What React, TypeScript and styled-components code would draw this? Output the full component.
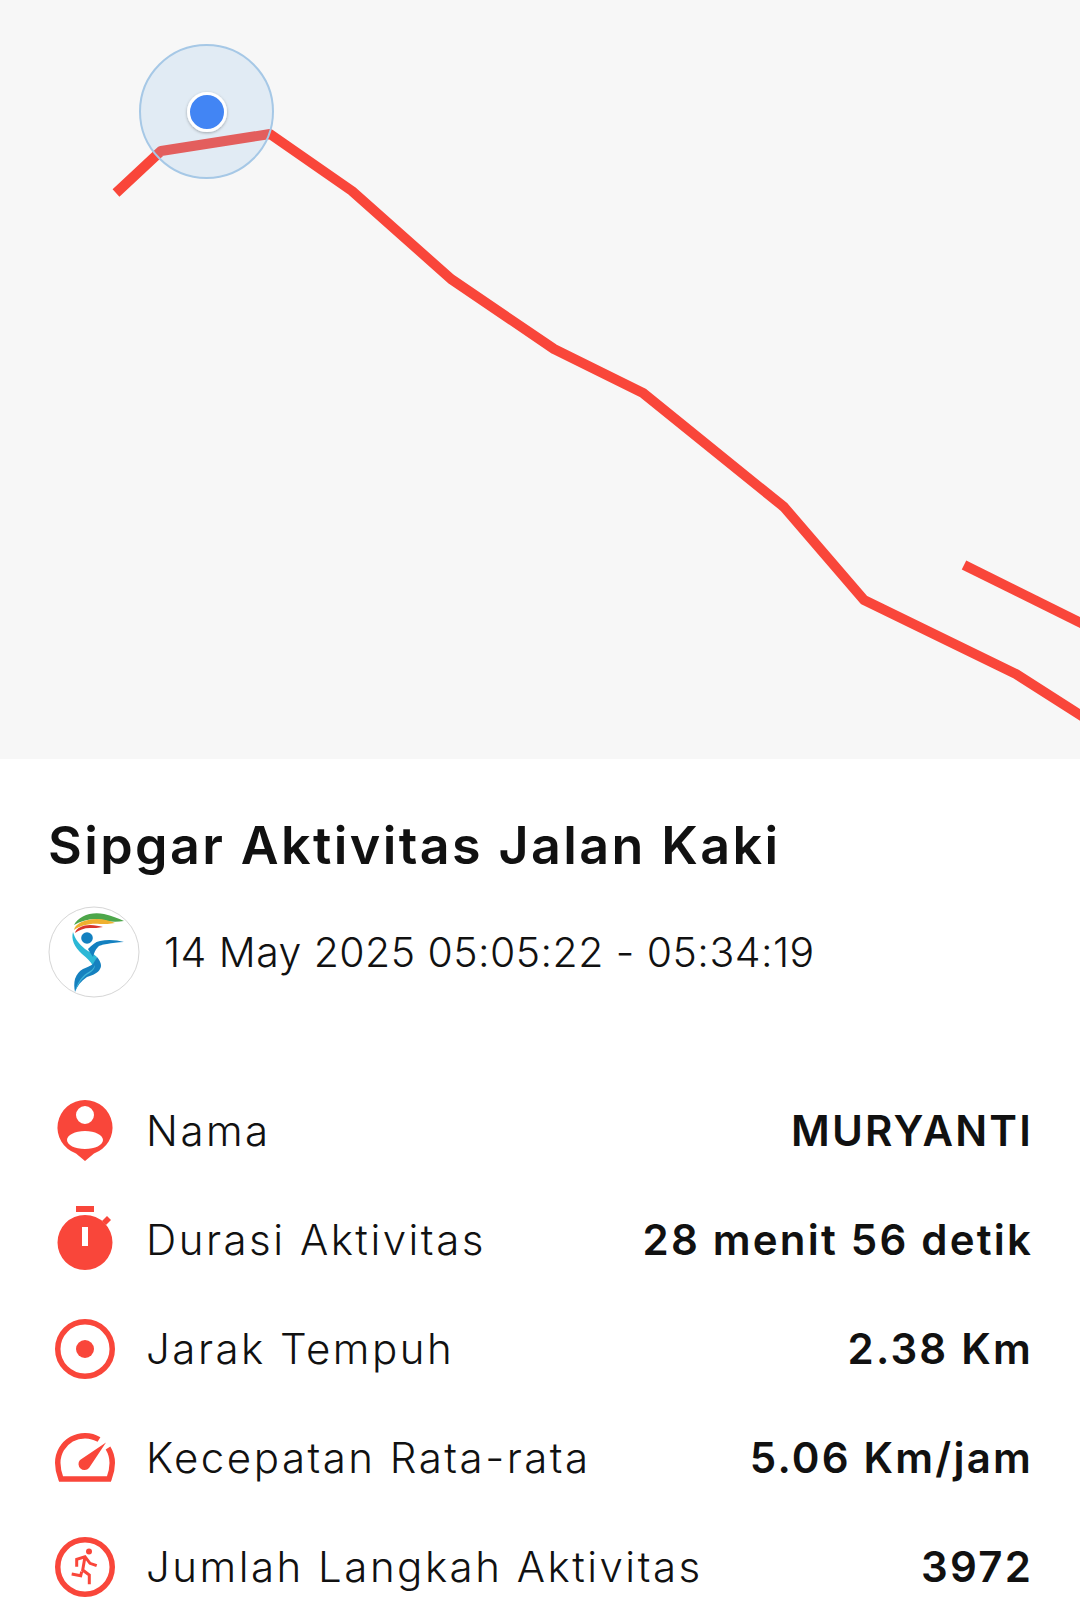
import { FC } from 'react';
import styled, { createGlobalStyle } from 'styled-components';

const RED = '#f9463a';

const GlobalStyle = createGlobalStyle`
  html, body {
    margin: 0;
    padding: 0;
    background: #fff;
    font-family: Inter, "Open Sans", sans-serif;
    color: #111;
  }
`;

const Page = styled.div`
  width: 1080px;
  height: 1624px;
  overflow: hidden;
`;

const MapArea = styled.div`
  height: 759px;
  background: #f7f7f7;
`;

const MapSvg = styled.svg`
  display: block;
`;

const Details = styled.section`
  padding: 55px 47px 0 48px;
`;

const Title = styled.h1`
  margin: 0;
  font-size: 52px;
  line-height: 64px;
  font-weight: 600;
  letter-spacing: 2.4px;
`;

const Meta = styled.div`
  display: flex;
  align-items: center;
  gap: 24px;
  margin-top: 28px;
`;

const Logo = styled.svg`
  flex: none;
`;

const DateText = styled.span`
  font-size: 41px;
  font-weight: 300;
  letter-spacing: 0.45px;
`;

const Rows = styled.div`
  display: flex;
  flex-direction: column;
  margin-top: 78px;
`;

const Row = styled.div`
  display: flex;
  align-items: center;
  height: 109px;
`;

const IconSlot = styled.svg`
  flex: none;
  width: 68px;
  height: 68px;
  margin: 0 27px 0 3px;
`;

const Label = styled.span`
  flex: 1;
  font-size: 42px;
  font-weight: 300;
  letter-spacing: 2.5px;
`;

const Value = styled.span`
  font-size: 42px;
  font-weight: 600;
  letter-spacing: 2.2px;
`;

const UserIcon: FC = () => (
  <IconSlot viewBox="0 0 68 68">
    <path
      fill={RED}
      fillRule="evenodd"
      d="M34 3a27.500 27.500 0 0 1 9 53.500L34 64l-9-7.500A27.500 27.500 0 0 1 34 3Zm0 6a9 9 0 1 0 0 18 9 9 0 0 0 0-18Zm0 25c-10 0-18 4-18 9s8 9 18 9 18-4 18-9-8-9-18-9Z"
    />
  </IconSlot>
);

const TimerIcon: FC = () => (
  <IconSlot viewBox="0 0 68 68">
    <path fill={RED} d="M25 0h18v6H25z" />
    <path fill={RED} d="m51 15 5-5 4 4-5 5z" />
    <path
      fill={RED}
      fillRule="evenodd"
      d="M34 9a27.500 27.500 0 1 1 0 55 27.500 27.500 0 0 1 0-55Zm-3 12v19h6V21Z"
    />
  </IconSlot>
);

const TargetIcon: FC = () => (
  <IconSlot viewBox="0 0 68 68">
    <circle cx="34" cy="34" r="27.250" fill="none" stroke={RED} strokeWidth="5.500" />
    <circle cx="34" cy="34" r="9" fill={RED} />
  </IconSlot>
);

const GaugeIcon: FC = () => (
  <IconSlot viewBox="0 0 68 68">
    <path
      fill="none"
      stroke={RED}
      strokeWidth="5.500"
      d="M48 15.500A27.250 27.250 0 0 0 6.750 39C6.750 45 8 50 10 55H58C60 50 61.250 45 61.250 39 61.250 33 59.500 28 57 24"
    />
    <path fill={RED} d="M55 18.500 38 44A6 6 0 0 1 29 36Z" />
  </IconSlot>
);

const RunnerIcon: FC = () => (
  <IconSlot viewBox="0 0 68 68">
    <circle cx="34" cy="34" r="27.250" fill="none" stroke={RED} strokeWidth="5.500" />
    <circle cx="38" cy="18.500" r="3" fill={RED} />
    <path
      fill="none"
      stroke={RED}
      strokeWidth="3"
      d="M25.700 33.700v-7.400L34 23.700l5 6.600 6.700 2.400M34 23.700 31.700 37l6.600 5v9.300M30.700 38.700l-1 4-9-1.700"
    />
  </IconSlot>
);

const rows = [
  { label: 'Nama', value: 'MURYANTI', icon: <UserIcon /> },
  { label: 'Durasi Aktivitas', value: '28 menit 56 detik', icon: <TimerIcon /> },
  { label: 'Jarak Tempuh', value: '2.38 Km', icon: <TargetIcon /> },
  { label: 'Kecepatan Rata-rata', value: '5.06 Km/jam', icon: <GaugeIcon /> },
  { label: 'Jumlah Langkah Aktivitas', value: '3972', icon: <RunnerIcon /> },
];

const App: FC = () => (
  <Page>
    <GlobalStyle />
    <MapArea>
      <MapSvg width="1080" height="759" viewBox="0 0 1080 759">
        <defs>
          <filter id="dot-shadow" x="-30%" y="-30%" width="160%" height="160%">
            <feDropShadow dx="0" dy="1" stdDeviation="1.500" floodColor="#000" floodOpacity="0.3" />
          </filter>
        </defs>
        <g fill="none" stroke={RED} strokeWidth="10" strokeLinejoin="round">
          <path d="M116 193 161 151 270 134 352 191 451 279 554 349 643 393 784 507 864 600 1016 674 1085 718" />
          <path d="M964 565 1085 625" />
        </g>
        <circle cx="206.500" cy="111.500" r="66.500" fill="#8ec0ed" fillOpacity="0.2" />
        <circle cx="206.500" cy="111.500" r="66.500" fill="none" stroke="#a6c8e6" strokeWidth="2" />
        <circle cx="207" cy="112" r="18.500" fill="#4285f4" stroke="#fff" strokeWidth="3" filter="url(#dot-shadow)" />
      </MapSvg>
    </MapArea>
    <Details>
      <Title>Sipgar Aktivitas Jalan Kaki</Title>
      <Meta>
        <Logo width="92" height="92" viewBox="0 0 92 92">
          <circle cx="46" cy="46" r="45" fill="#fff" stroke="#d6d6d6" strokeWidth="1" />
          <path fill="#4da64a" d="M26 19C30 10 44 5 56 8 64 10 70 12 76 15 70 16 64 16 59 15 48 12 36 13 26 19Z" />
          <path fill="#efb02f" d="M26 24C27 18 36 13 49 13 56 13 62 15 67 17 62 18 57 18 52 18 43 17 33 19 26 24Z" />
          <path fill="#d9352c" d="M27 27C28 22 35 19 42 19 47 19 51 20 55 21 50 22 46 22 42 22 36 22 31 24 27 27Z" />
          <circle cx="39" cy="32" r="5.800" fill="#1380c0" />
          <path fill="#2cb8d6" d="M25 26C23 33 26 41 34 48 39 52 43 56 45 60L49 51C45 47 41 46 37 43 31 38 27 33 25 26Z" />
          <path fill="#1380c0" d="M40 43C44 39 47 36 52 35 60 33 69 34 76 36 70 36 64 37 59 38 54 39 52 39 50 41 47 44 46 47 45 51 43 48 41 45 40 43Z" />
          <path fill="#1581bf" d="M49 51C53 56 54 60 52 63 50 67 45 69 39 71 33 75 29 80 27 86 26 81 26 77 27 73 29 68 31 65 35 63 39 61 43 60 45 58Z" />
          <path fill="#3fb3d8" d="M27 86C29 77 33 71 39 67 43 65 46 62 47 59 47 63 44 66 40 68 34 72 30 78 27 86Z" />
        </Logo>
        <DateText>14 May 2025 05:05:22 - 05:34:19</DateText>
      </Meta>
      <Rows>
        {rows.map((row) => (
          <Row key={row.label}>
            {row.icon}
            <Label>{row.label}</Label>
            <Value>{row.value}</Value>
          </Row>
        ))}
      </Rows>
    </Details>
  </Page>
);

export default App;
